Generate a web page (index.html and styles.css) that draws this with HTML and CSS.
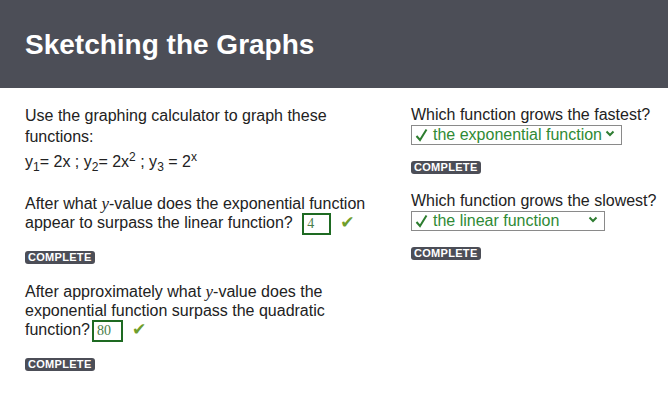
FILE: index.html
```html
<!DOCTYPE html>
<html>
<head>
<meta charset="utf-8">
<link rel="stylesheet" href="styles.css">
</head>
<body>
<header class="hdr"><h1 class="title">Sketching the Graphs</h1></header>
<main class="content">
  <section class="col left">
    <p class="para first">Use the graphing calculator to graph these functions:</p>
    <p class="para eq">y<sub>1</sub>= 2x ; y<sub>2</sub>= 2x<sup>2</sup> ; y<sub>3</sub> = 2<sup>x</sup></p>
    <p class="para q1">After what <i class="mv">y</i>-value does the exponential function appear to surpass the linear function? <span class="ans w1">4</span><span class="ok">✔</span></p>
    <div class="badge-row"><span class="badge">COMPLETE</span></div>
    <p class="para q2">After approximately what <i class="mv">y</i>-value does the exponential function surpass the quadratic function?<span class="ans w2">80</span><span class="ok">✔</span></p>
    <div class="badge-row"><span class="badge">COMPLETE</span></div>
  </section>
  <section class="col right">
    <p class="para">Which function grows the fastest?</p>
    <div class="sel s1"><svg class="tick" width="13" height="14" viewBox="0 0 13 14"><path d="M1.5 8 L5 12 L11.5 1.5" fill="none" stroke="#2d7d2f" stroke-width="2"/></svg>the exponential function<svg class="chev" width="10" height="7" viewBox="0 0 10 7"><path d="M1.5 1.5 L5 5 L8.5 1.5" fill="none" stroke="#2f7d32" stroke-width="2"/></svg></div>
    <div class="badge-row"><span class="badge">COMPLETE</span></div>
    <p class="para q4">Which function grows the slowest?</p>
    <div class="sel s2"><svg class="tick" width="13" height="14" viewBox="0 0 13 14"><path d="M1.5 8 L5 12 L11.5 1.5" fill="none" stroke="#2d7d2f" stroke-width="2"/></svg>the linear function<svg class="chev" width="10" height="7" viewBox="0 0 10 7"><path d="M1.5 1.5 L5 5 L8.5 1.5" fill="none" stroke="#2f7d32" stroke-width="2"/></svg></div>
    <div class="badge-row"><span class="badge">COMPLETE</span></div>
  </section>
</main>
</body>
</html>
```
FILE: styles.css
```css
html, body { margin: 0; padding: 0; background: #fff; }
body { font-family: "Liberation Sans", Arial, sans-serif; color: #222; font-size: 16px; }
.hdr { background: #4c4e57; height: 88px; display: flex; align-items: center; padding: 0 25px; }
.title { margin: 0; color: #fff; font-size: 28px; font-weight: bold; padding-top: 1px; }
.content { display: grid; grid-template-columns: 361px 1fr; column-gap: 25px; padding: 0 8px 0 25px; }
.col { display: flex; flex-direction: column; padding-top: 17px; }
.para { margin: 0; line-height: 20px; }
.first { line-height: 21px; }
.eq { margin-top: 5px; }
.eq sub, .eq sup { font-size: 12px; line-height: 0; }
.q1 { margin-top: 22px; line-height: 19px; }
.q2 { margin-top: 19px; line-height: 18.5px; }
.mv { font-family: "Liberation Serif", serif; font-size: 17px; }
.ans { display: inline-block; border: 2px solid #1e6a22; color: #4a7d4a; font-family: "Liberation Serif", serif; font-size: 14px; line-height: 18px; height: 18px; padding: 0 3px; vertical-align: middle; box-sizing: content-box; }
.w1 { width: 19px; margin-left: 5px; }
.w2 { width: 21px; margin-left: 2px; }
.ok { color: #6f9e2c; font-family: "DejaVu Sans", sans-serif; font-size: 17px; line-height: 18px; margin-left: 9px; }
.badge-row { margin-top: 16px; display: flex; }
.badge { background: #4c4e57; color: #fff; font-weight: bold; font-size: 11px; letter-spacing: 0.3px; line-height: 13px; padding: 0 3px; border-radius: 3px; }
.sel { display: flex; align-items: center; border: 1px solid #8a8a8a; height: 18px; color: #2f8a35; font-size: 16px; padding: 0 6px 0 3px; box-sizing: content-box; position: relative; }
.tick { margin-right: 5px; flex: none; }
.s1 { width: 200px; }
.s2 { width: 183px; }
.chev { position: absolute; right: 6px; top: 4px; }
.q4 { margin-top: 17px; }
```
